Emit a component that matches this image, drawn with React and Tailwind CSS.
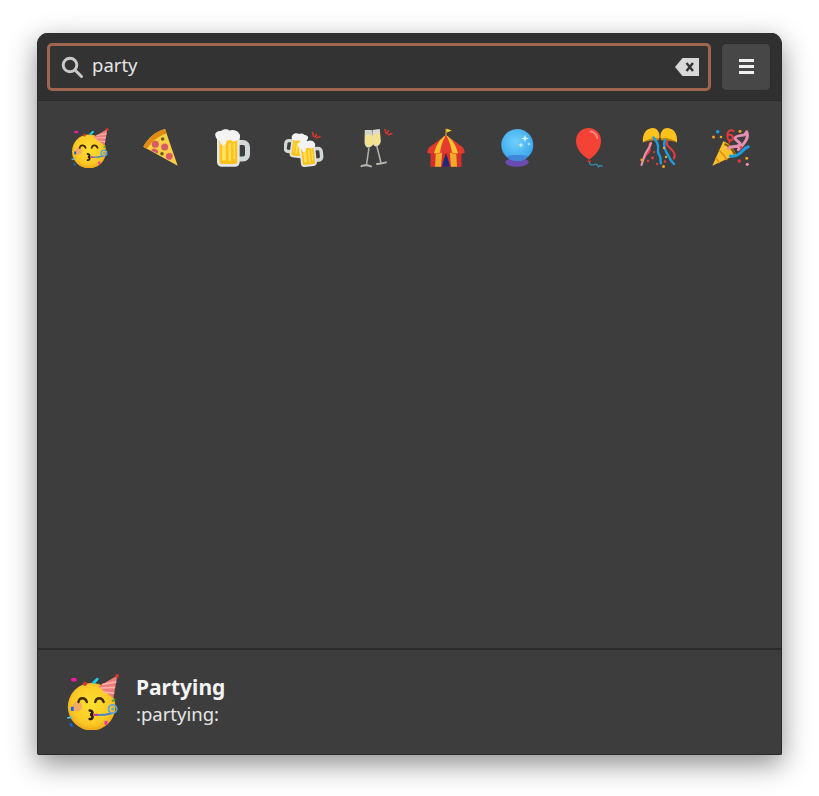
import React from 'react';

const font = { fontFamily: '"Noto Sans", "Open Sans", sans-serif' };

const Partying = ({ className }) => (
  <svg viewBox="0 0 40 40" className={className}>
    <defs>
      <radialGradient id="faceGrad" cx="50%" cy="45%" r="55%">
        <stop offset="0%" stopColor="#fde030" />
        <stop offset="75%" stopColor="#fbc926" />
        <stop offset="100%" stopColor="#f0a818" />
      </radialGradient>
    </defs>
    <circle cx="19" cy="23.4" r="17" fill="url(#faceGrad)" />
    <circle cx="8.8" cy="23.3" r="3.4" fill="#f4a070" opacity="0.8" />
    <path d="M23.8 9 37.4 1 34.5 17.4Z" fill="#ef7b7b" />
    <path d="M26.5 7.5 36.6 5.6M25.3 10 35.8 9.6M27 13 35.2 13.6" stroke="#f9b3ac" strokeWidth="1.2" />
    <circle cx="37.2" cy="1.4" r="1.4" fill="#d9342b" />
    <path d="M9.6 20c.6-3.6 5-3.600 6 0M21.600 20c.6-3.600 5-3.600 6 0" fill="none" stroke="#43290f" strokeWidth="1.700" strokeLinecap="round" />
    <path d="M17.600 26c2.600.2 2.600 2.600.4 3 2.400.4 2.200 3.200-.4 3.200" fill="none" stroke="#2e1c0a" strokeWidth="1.800" strokeLinecap="round" />
    <path d="M20.500 29.200c4.500.4 9-.1 13-1.200" fill="none" stroke="#4a86c5" strokeWidth="1.400" />
    <path d="M20.500 29.200h3" stroke="#e0328a" strokeWidth="1.600" />
    <circle cx="34" cy="25" r="2.900" fill="none" stroke="#5aa6d8" strokeWidth="1.300" />
    <circle cx="34" cy="25" r="1" fill="#5aa6d8" />
    <rect x="4.200" y="2.800" width="4.200" height="2.500" rx="1.200" fill="#ec1c9c" />
    <circle cx="14.300" cy="7" r="1.500" fill="#d9342b" />
    <path d="M20.400 6.200 23 3.800" stroke="#14d4ee" strokeWidth="2" strokeLinecap="round" />
    <path d="M33.500 19.500 36 18" stroke="#3aa637" strokeWidth="1.200" />
    <rect x="4.200" y="23.400" width="2" height="3" fill="#1666e0" />
    <path d="M1.600 31.400 5 30.800" stroke="#5cc6e6" strokeWidth="1.200" />
    <path d="M3.600 35.400 5.400 37.400" stroke="#1666e0" strokeWidth="1.500" />
    <rect x="28.200" y="33.400" width="2.200" height="3" rx="0.600" fill="#f03a9c" />
  </svg>
);

const Pizza = ({ className }) => (
  <svg viewBox="0 0 40 40" className={className}>
    <path d="M2.300 18.700C7 10 14 4 24 1L36.700 37.700Z" fill="#f9cf45" />
    <path d="M2.300 18.700C7 10 14 4 24 1l1.600 4.400C17 8 11 13 5.800 21Z" fill="#e28a12" />
    <circle cx="14.300" cy="16.300" r="3.500" fill="#d95a67" />
    <circle cx="23.700" cy="19" r="3.500" fill="#d95a67" />
    <path d="M10 22.600a3.600 3.600 0 0 1 6.600 3.200Z" fill="#d95a67" />
    <circle cx="28.300" cy="28.300" r="3.400" fill="#d95a67" />
    <circle cx="21.700" cy="11" r="1.800" fill="#6a5a20" />
    <circle cx="21" cy="25.700" r="1.800" fill="#6a5a20" />
  </svg>
);

// flip: handle on the left, for the left mug of the clinking pair
const Mug = ({ x = 0, y = 0, s = 1, flip = false }) => (
  <g transform={`translate(${x} ${y}) scale(${flip ? -s : s} ${s})`}>
    <path d="M27 14.500h4a4.500 4.500 0 0 1 4.500 4.500v7.500a4.500 4.500 0 0 1-4.500 4.500h-4" fill="none" stroke="#d4d7d7" strokeWidth="5" />
    <path d="M5 8h22.700v26c0 3-2 4.700-5 4.700H10c-3 0-5-1.700-5-4.700Z" fill="#e3e6e6" />
    <path d="M7.500 12h17.700v21.500c0 1.600-1 2.500-2.500 2.500H10c-1.500 0-2.500-.9-2.500-2.500Z" fill="#fcc21b" />
    <path d="M10 15h4v17.500h-4ZM16.500 15h2.500v18h-2.500ZM21.500 15h1.500v16h-1.500Z" fill="#ffdf5a" />
    <path d="M3.500 8C2 4.500 6.500 2.500 9 3c2-2.300 6.500-2.300 8.500-.5 3-1.500 8.500 0 9.500 3 2 1.800 1.200 6-2 6.500-1.500 2-5 2-6.500-.3-1.300.8-2.600 1-3.600.5-.6 3-2 5.300-3.700 5.300-2 0-3-2.300-3.300-5C6 12.600 3.800 10.500 3.500 8Z" fill="#f3f3f3" />
  </g>
);

const Beer = ({ className }) => (
  <svg viewBox="0 0 40 40" className={className}>
    <Mug />
  </svg>
);

const Clink = ({ className }) => (
  <svg viewBox="0 0 40 40" className={className}>
    <g transform="rotate(8 12 18)">
      <Mug x="25" y="4" s="0.66" flip />
    </g>
    <g transform="rotate(-6 28 26)">
      <Mug x="12.500" y="11" s="0.7" />
    </g>
    <path d="M28.500 4.500 29.500 8M32.500 6.500 30.800 9M36 8.500 32.500 9.800" stroke="#d9342b" strokeWidth="1.600" strokeLinecap="round" />
  </svg>
);

const Champagne = ({ className }) => (
  <svg viewBox="0 0 40 40" className={className}>
    <path d="M9.800 2h7l1.800 11c.5 3.500-2 6-4.800 6.500S9.500 17 9.500 13.500Z" fill="#d4d5cc" />
    <path d="M10.300 7h6.800l1 6.500c.3 2.800-1.500 4.800-3.600 5.200s-4.300-1.700-4.300-5Z" fill="#f3e28a" />
    <path d="M14 19.500 11.500 37" stroke="#b3b3ad" strokeWidth="1.500" />
    <path d="M6.500 38.200c2.500-1.200 7-.9 9.500.2" fill="none" stroke="#b8b8b2" strokeWidth="2" strokeLinecap="round" />
    <path d="M17.500 2 24.800 1l.9 11.500c.2 3-1.800 5.500-4.600 6-2.500-.2-3.800-3-3.600-6Z" fill="#dcdcd2" />
    <path d="M18.500 6 25 5.500l.3 7c.1 2.600-1.600 4.500-4 5-2 .1-3.200-2-3.100-4.700Z" fill="#f3e28a" />
    <path d="M21.800 18 26 35" stroke="#b3b3ad" strokeWidth="1.500" />
    <path d="M22 36c2.500-.2 6.500-.8 9-1.600" fill="none" stroke="#b8b8b2" strokeWidth="2" strokeLinecap="round" />
    <path d="M30 1.500 31 5M33.500 2.500 32 5.800M37 5.500 33.500 6.800" stroke="#d9342b" strokeWidth="1.500" strokeLinecap="round" />
  </svg>
);

const Circus = ({ className }) => (
  <svg viewBox="0 0 40 40" className={className}>
    <path d="M20 8V1" stroke="#c89a2a" strokeWidth="1.200" />
    <path d="M20.400.4 25.800 2.400 20.400 4.800Z" fill="#f9c92c" />
    {/* walls */}
    <path d="M4.500 22H35.500V38.800H4.500Z" fill="#d6302a" />
    <path d="M10 22H16.500L15 38.800H9ZM23.500 22H30L31 38.800H25Z" fill="#f4a92a" />
    <path d="M20 25c-1.500 4.500-3.200 9-3.900 13.800h7.800C23.200 34 21.500 29.500 20 25Z" fill="#1d2a7a" />
    {/* roof */}
    <path d="M20 7 37 19.500 39 24.500c-2 1.500-5 1.500-7 0-2 1.500-5 1.500-7 0-1.500 1.500-3.500 1.500-5 .5-1.500 1-3.500 1-5-.5-2 1.500-5 1.500-7 0-2 1.500-5 1.500-7 0L3 19.500Z" fill="#e53b2f" />
    <path d="M20 7C14 11 10 17 8 25.500c2-.2 4-.2 6-1 .8-6 2.800-12 6-17.500ZM20 7c6 4 10 10 12 18.500-2-.2-4-.2-6-1-.8-6-2.800-12-6-17.500Z" fill="#f9c22e" />
    <path d="M20 7c-2.200 5.500-3 11-3 17.500 1 .7 2 .8 3 .5 1 .3 2 .2 3-.5 0-6.500-.8-12-3-17.500Z" fill="#e53b2f" />
  </svg>
);

const Crystal = ({ className }) => (
  <svg viewBox="0 0 40 40" className={className}>
    <defs>
      <radialGradient id="ballGrad" cx="45%" cy="40%" r="60%">
        <stop offset="0%" stopColor="#6fd0fa" />
        <stop offset="100%" stopColor="#3aa6ec" />
      </radialGradient>
    </defs>
    <ellipse cx="20" cy="34.300" rx="11.700" ry="4.500" fill="#6a4bb0" />
    <circle cx="20.300" cy="17" r="16" fill="url(#ballGrad)" />
    <path d="M9 28.500c6-2 16-2 22.500 0C28.500 31.500 24.500 33 20.300 33S12 31.500 9 28.500Z" fill="#3f86d8" />
    <path d="M28 6.500l1 3 3 1-3 1-1 3-1-3-3-1 3-1ZM24 14l.7 2.300 2.300.7-2.300.7-.7 2.300-.7-2.300-2.300-.7 2.300-.7ZM32 14l.5 1.500 1.500.5-1.500.5-.5 1.500-.5-1.500-1.500-.5 1.500-.5Z" fill="#cfeffd" />
  </svg>
);

const Balloon = ({ className }) => (
  <svg viewBox="0 0 40 40" className={className}>
    <path d="M19.500 0C26.500 0 32 5.500 32 13c0 8-6 15-12 18.500C13.500 28 7 21 7 13 7 5.500 12.500 0 19.500 0Z" fill="#f44336" />
    <path d="M21.500 3.500c3.500.5 6 3 6.800 6.500" fill="none" stroke="#fa8a80" strokeWidth="1.800" strokeLinecap="round" />
    <path d="M20 31 22.500 34H18Z" fill="#d4281f" />
    <path d="M20.500 34c-.5 3 3 3.500 5 2.500s3.500 1 4 2.500c1-1.500 2.500-2 4-.5" fill="none" stroke="#3a8ebf" strokeWidth="1.200" />
  </svg>
);

const ConfettiBall = ({ className }) => (
  <svg viewBox="0 0 40 40" className={className}>
    <path d="M3 14.500C2 6.500 6 .3 12.500 0 17.500 0 20 4.500 19.500 10 14 9.500 8 11 3 14.500Z" fill="#fcc21b" />
    <path d="M37 14.500C38 6.500 34 .3 27.500 0 22.500 0 20 4.500 20.500 10 26 9.500 32 11 37 14.500Z" fill="#fcc21b" />
    <path d="M4 14.200C8 11 14 9.500 19.500 10l-1 2.500C13 12 8 13 4 14.200Z" fill="#c98a10" />
    <path d="M36 14.200C32 11 26 9.500 20.500 10l1 2.500C27 12 32 13 36 14.200Z" fill="#c98a10" />
    <path d="M10 15c-2 3 1 5-.5 8S5 26 4.500 30" fill="none" stroke="#e8393a" strokeWidth="2" strokeLinecap="round" />
    <path d="M11 15c-1 5-5 8-6.500 13-1 3-2 6-3 9" fill="none" stroke="#e58fb2" strokeWidth="2.200" strokeLinecap="round" />
    <path d="M13.500 9.500c3 4 5.500 7 4.500 12s3 6 2.500 9.500c-.3 2 .3 3.500 .5 4.500" fill="none" stroke="#1b9de2" strokeWidth="2.400" strokeLinecap="round" />
    <path d="M27.500 13c-2 3 0 5 4 8.500s3.500 6 2.500 9" fill="none" stroke="#e8393a" strokeWidth="2.200" strokeLinecap="round" />
    <path d="M25 12c-1.500 4-1 8 1.500 12.500 2.500 4 3.500 8 7.500 11.500" fill="none" stroke="#1b9de2" strokeWidth="2.400" strokeLinecap="round" />
    <g fill="#f4a31c">
      <circle cx="1.800" cy="32" r="1.400" /><circle cx="23.500" cy="38.500" r="1.500" /><circle cx="26" cy="29" r="1.200" /><circle cx="24" cy="20" r="1.200" />
    </g>
    <g fill="#e8393a">
      <circle cx="12.500" cy="30" r="1.400" /><circle cx="8" cy="33" r="1.200" /><circle cx="17" cy="36" r="1.200" /><circle cx="25" cy="33.500" r="1.300" /><circle cx="14" cy="24" r="1.100" />
    </g>
  </svg>
);

const Popper = ({ className }) => (
  <svg viewBox="0 0 40 40" className={className}>
    <path d="M1.300 37.700 12.300 13.300c5 1.500 11.500 8 12.700 13.500Z" fill="#fbc02d" />
    <path d="M8 22c3 3 6 6.500 8 10M4.500 30c1.500 1.500 3 3.500 4 5" stroke="#e08e0c" strokeWidth="1.600" fill="none" />
    <path d="M13.500 16c4 1.500 8.500 6 10.500 10.500" stroke="#8a5a0a" strokeWidth="2.400" fill="none" />
    <path d="M22.500 3c-2.500-1.500-5.500-.5-6 3-.4 3.500 0 6.500 2.800 6.500s3.600-4.500 .7-5.500-3.500 .5-3.500 1.500" fill="none" stroke="#e8393a" strokeWidth="1.900" strokeLinecap="round" />
    <path d="M18 15.500 19 11" stroke="#e8393a" strokeWidth="1.600" />
    <path d="M17.300 20.300c4-3.500 8.500-.5 11.700-3.300 1.800-1.800-5-4.800-5-6.700 0-2.500 7-3 9-3.300 2-1 2.500-3.300 2.700-3.300 1 3 .8 6-.4 8-1.500 3-4 6-8 10" fill="none" stroke="#e58fb2" strokeWidth="3" strokeLinecap="round" strokeLinejoin="round" />
    <path d="M19.500 28c3.500.5 6.500-.3 9.500-2.700s4-5.500 8.300-6.600" fill="none" stroke="#1b9de2" strokeWidth="3" strokeLinecap="round" />
    <g fill="#f4a31c">
      <circle cx="2.500" cy="9" r="1.500" /><circle cx="10" cy="9" r="1.300" /><circle cx="29" cy="3.300" r="1.500" /><circle cx="35.700" cy="30.300" r="1.500" />
    </g>
    <circle cx="6.700" cy="3.700" r="1.800" fill="#1b9de2" />
    <g fill="#e8393a">
      <circle cx="30" cy="19.500" r="1.300" /><circle cx="28.300" cy="33" r="1.700" />
    </g>
    <circle cx="36.300" cy="36.300" r="1.600" fill="#e58fb2" />
  </svg>
);

const emojis = [Partying, Pizza, Beer, Clink, Champagne, Circus, Crystal, Balloon, ConfettiBall, Popper];

export default function App() {
  return (
    <div className="bg-white w-[819px] h-[796px] pt-[33px] pl-[37px]" style={font}>
      <div className="w-[745px] h-[722px] flex flex-col bg-[#3d3d3d] rounded-t-[11px] rounded-b-[2px] border-x border-b border-[#2a2a2a] shadow-[0_9px_28px_rgba(0,0,0,0.45)] overflow-hidden">
        <div className="h-[68px] shrink-0 bg-[#303030] border-b border-[#2a2a2a] flex items-center gap-[10px] pl-[9px] pr-[10px]">
          <div className="flex-1 h-[48px] flex items-center bg-[#333333] border-[3px] border-[#a0654f] rounded-[5px] pl-[10px] pr-[9px]">
            <svg viewBox="0 0 24 24" className="w-[24px] h-[24px] shrink-0" fill="none" stroke="#c8c8c8" strokeWidth="3" strokeLinecap="round">
              <circle cx="10" cy="10" r="6.800" />
              <path d="M15.200 15.200 21.500 21.500" />
            </svg>
            <span className="ml-[8px] flex-1 text-[18.500px] leading-none -mt-[2px] text-[#e6e6e6]">party</span>
            <svg viewBox="0 0 24 18" className="w-[24px] h-[18px] shrink-0">
              <path d="M7.500 0H24V18H7.500L0 9Z" fill="#d8d8d8" />
              <path d="M11.500 5 18 13M18 5 11.500 13" stroke="#333333" strokeWidth="2.400" />
            </svg>
          </div>
          <div className="w-[50px] h-[48px] shrink-0 flex flex-col items-center justify-center gap-[3px] bg-[#474747] rounded-[5px] border border-[#2c2c2c]">
            <span className="w-[15px] h-[3px] bg-[#f0f0f0]" />
            <span className="w-[15px] h-[3px] bg-[#f0f0f0]" />
            <span className="w-[15px] h-[3px] bg-[#f0f0f0]" />
          </div>
        </div>

        <div className="flex-1 pl-[16px] pr-[14px] pt-[27px]">
          <div className="grid grid-cols-10">
            {emojis.map((Emoji, i) => (
              <div key={i} className="flex justify-center">
                <Emoji className="w-[40px] h-[40px]" />
              </div>
            ))}
          </div>
        </div>

        <div className="h-[106px] shrink-0 border-t-2 border-[#2b2b2b] flex items-center pl-[27px]">
          <Partying className="w-[56px] h-[56px]" />
          <div className="ml-[15px] flex flex-col -mt-[4px]">
            <span className="text-[21px] leading-[28px] font-bold text-[#f4f4f4]">Partying</span>
            <span className="text-[18.500px] leading-[26px] text-[#e6e6e6]">:partying:</span>
          </div>
        </div>
      </div>
    </div>
  );
}
